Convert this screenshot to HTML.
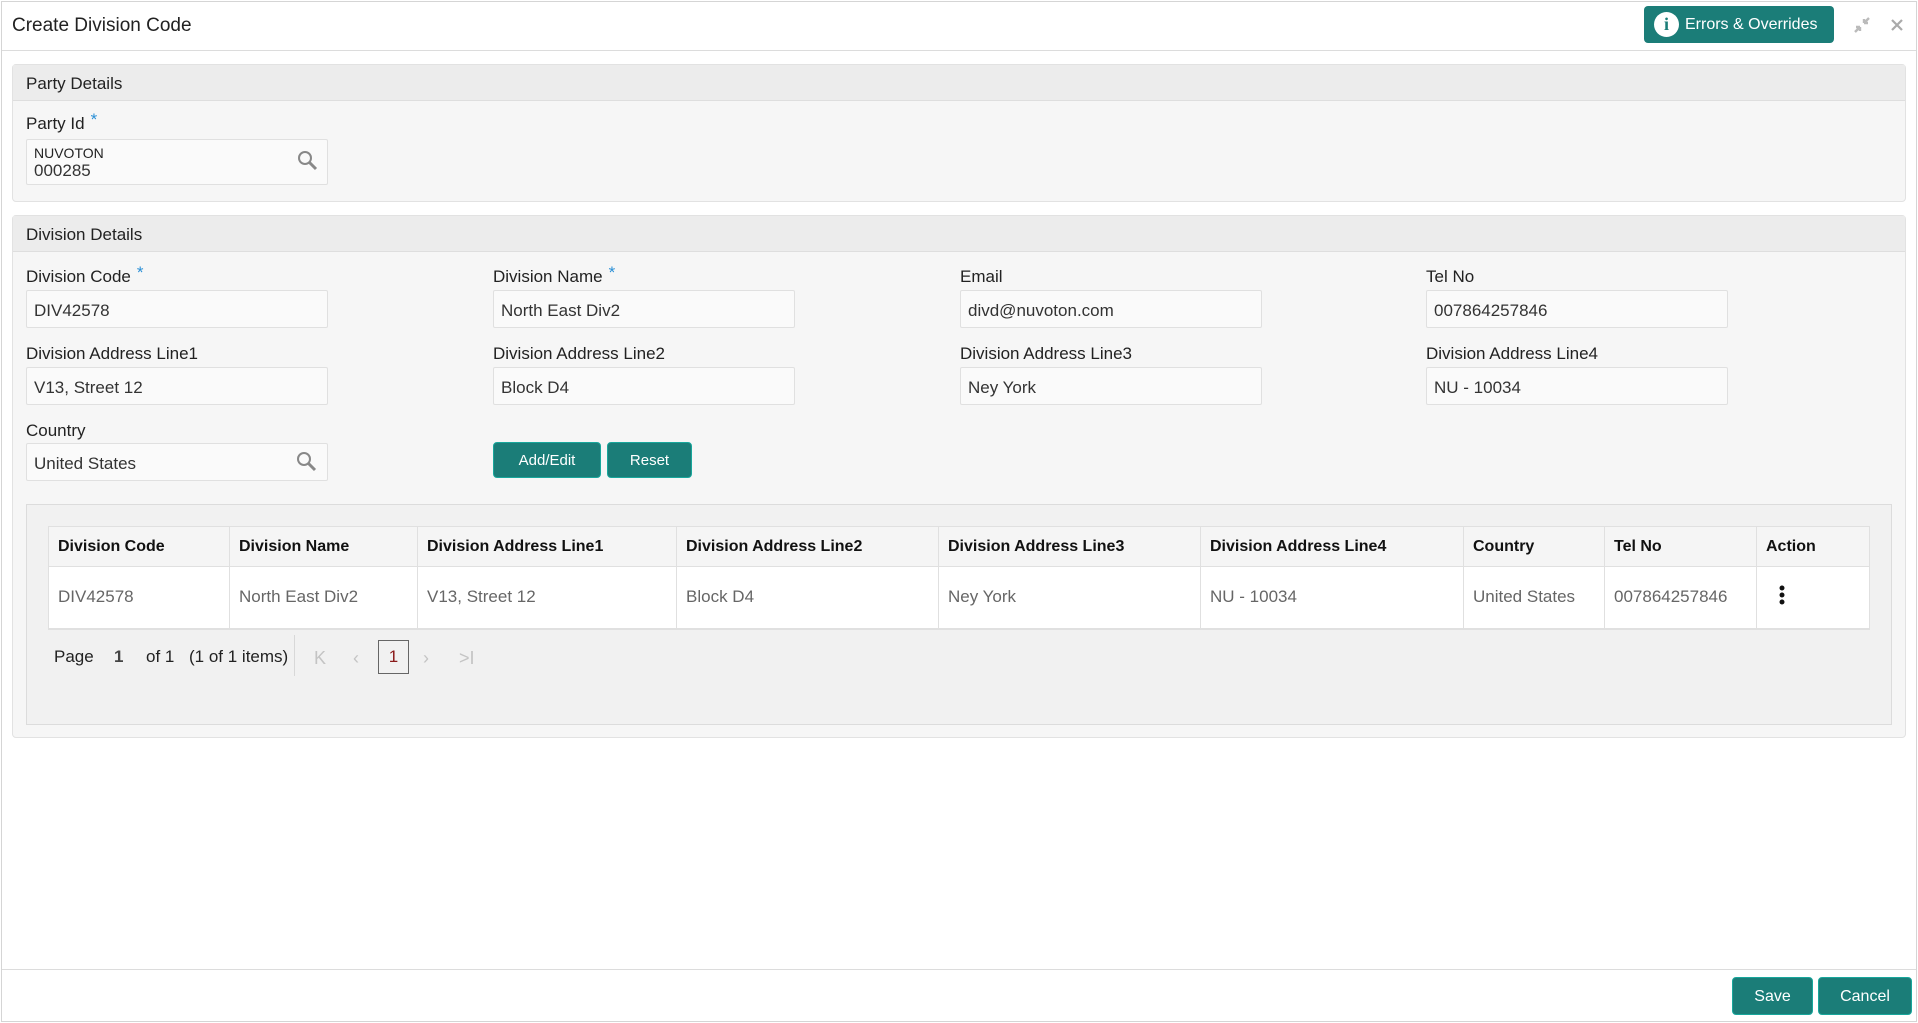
<!DOCTYPE html>
<html><head><meta charset="utf-8"><style>
*{box-sizing:border-box;margin:0;padding:0}
body{width:1918px;height:1023px;background:#fff;font-family:"Liberation Sans",sans-serif;color:#111;position:relative;overflow:hidden}
.a{position:absolute}
.frame{left:1px;top:1px;width:1916px;height:1021px;border:1px solid #d5d5d5}
.title{left:12px;top:15px;font-size:19px;color:#222}
.hline{left:2px;top:50px;width:1914px;height:1px;background:#dcdcdc}
.err{left:1644px;top:6px;width:190px;height:37px;background:#1b7d78;border-radius:4px;color:#fff;font-size:16px}
.err .ic{position:absolute;left:10px;top:6px;width:25px;height:25px;border-radius:50%;background:#fff;color:#1b7d78;font:bold 18px "Liberation Serif",serif;text-align:center;line-height:25px}
.err span{position:absolute;left:41px;top:10px}
.panel{left:12px;width:1894px;background:#f6f6f6;border:1px solid #e2e2e2;border-radius:4px}
.ph{position:absolute;left:0;top:0;right:0;height:36px;background:#ececec;border-bottom:1px solid #dedede;font-size:17px;padding:9px 13px;color:#222}
.lbl{font-size:17px;color:#222}
.lbl b{color:#2a8fd6;font-weight:normal;margin-left:6px;position:relative;top:-4px}
.inp{width:302px;height:38px;background:#fafafa;border:1px solid #e0e0e0;border-radius:2px;font-size:17px;color:#333;padding:10px 7px}
.btn{background:#1b7d78;border:1px solid #18a79c;border-radius:4px;color:#fff;font-size:15px;text-align:center;line-height:36px}
.grid{left:26px;top:504px;width:1866px;height:221px;background:#f1f1f1;border:1px solid #dcdcdc}
table{position:absolute;left:48px;top:526px;width:1822px;border-collapse:collapse}
td,th{border:1px solid #e0e0e0;text-align:left;padding:0 9px;font-size:17px}
th{height:40px;background:#f5f5f5;font-weight:bold;font-size:16px;color:#111}
td{height:62px;background:#fff;color:#666;border-bottom:2px solid #e0e0e0}
.pg{font-size:17px;color:#222;top:647px}
.gi{color:#c4c4c4;font-size:18px;top:648px}
.fline{left:2px;top:969px;width:1914px;height:1px;background:#dcdcdc}
</style></head><body>
<div class="a frame"></div>
<div class="a title">Create Division Code</div>
<div class="a hline"></div>
<div class="a err"><div class="ic">i</div><span>Errors &amp; Overrides</span></div>
<svg class="a" style="left:1852px;top:15px" width="20" height="20" viewBox="0 0 20 20"><path d="M3 17 L8 12 M8 12 L4 12 M8 12 L8 16" stroke="#bbb" stroke-width="2.4" fill="none"/><path d="M17 3 L12 8 M12 8 L16 8 M12 8 L12 4" stroke="#bbb" stroke-width="2.4" fill="none"/></svg>
<svg class="a" style="left:1890px;top:18px" width="14" height="14" viewBox="0 0 14 14"><path d="M2 2 L12 12 M12 2 L2 12" stroke="#aaa" stroke-width="2.2"/></svg>

<div class="a panel" style="top:64px;height:138px"><div class="ph">Party Details</div></div>
<div class="a lbl" style="left:26px;top:114px">Party Id<b>*</b></div>
<div class="a inp" style="left:26px;top:139px;height:46px;padding:5px 7px;font-size:14px;line-height:17px;color:#222">NUVOTON<br><span style="font-size:17px;color:#333">000285</span></div>
<svg class="a" style="left:297px;top:150px" width="22" height="22" viewBox="0 0 22 22"><circle cx="8" cy="8" r="6" stroke="#888" stroke-width="2" fill="none"/><path d="M12.5 12.5 L19 19" stroke="#888" stroke-width="3"/></svg>

<div class="a panel" style="top:215px;height:523px"><div class="ph">Division Details</div></div>

<div class="a lbl" style="left:26px;top:267px">Division Code<b>*</b></div>
<div class="a lbl" style="left:493px;top:267px">Division Name<b>*</b></div>
<div class="a lbl" style="left:960px;top:267px">Email</div>
<div class="a lbl" style="left:1426px;top:267px">Tel No</div>
<div class="a inp" style="left:26px;top:290px">DIV42578</div>
<div class="a inp" style="left:493px;top:290px">North East Div2</div>
<div class="a inp" style="left:960px;top:290px">divd@nuvoton.com</div>
<div class="a inp" style="left:1426px;top:290px">007864257846</div>

<div class="a lbl" style="left:26px;top:344px">Division Address Line1</div>
<div class="a lbl" style="left:493px;top:344px">Division Address Line2</div>
<div class="a lbl" style="left:960px;top:344px">Division Address Line3</div>
<div class="a lbl" style="left:1426px;top:344px">Division Address Line4</div>
<div class="a inp" style="left:26px;top:367px">V13, Street 12</div>
<div class="a inp" style="left:493px;top:367px">Block D4</div>
<div class="a inp" style="left:960px;top:367px">Ney York</div>
<div class="a inp" style="left:1426px;top:367px">NU - 10034</div>

<div class="a lbl" style="left:26px;top:421px">Country</div>
<div class="a inp" style="left:26px;top:443px">United States</div>
<svg class="a" style="left:296px;top:451px" width="22" height="22" viewBox="0 0 22 22"><circle cx="8" cy="8" r="6" stroke="#888" stroke-width="2" fill="none"/><path d="M12.5 12.5 L19 19" stroke="#888" stroke-width="3"/></svg>
<div class="a btn" style="left:493px;top:442px;width:108px;height:36px">Add/Edit</div>
<div class="a btn" style="left:607px;top:442px;width:85px;height:36px">Reset</div>

<div class="a grid"></div>
<table>
<tr><th style="width:181px">Division Code</th><th style="width:188px">Division Name</th><th style="width:259px">Division Address Line1</th><th style="width:262px">Division Address Line2</th><th style="width:262px">Division Address Line3</th><th style="width:263px">Division Address Line4</th><th style="width:141px">Country</th><th style="width:152px">Tel No</th><th>Action</th></tr>
<tr><td>DIV42578</td><td>North East Div2</td><td>V13, Street 12</td><td>Block D4</td><td>Ney York</td><td>NU - 10034</td><td>United States</td><td>007864257846</td><td style="padding-left:22px"><svg width="6" height="20" viewBox="0 0 6 20"><circle cx="3" cy="3" r="2.5" fill="#111"/><circle cx="3" cy="10" r="2.5" fill="#111"/><circle cx="3" cy="17" r="2.5" fill="#111"/></svg></td></tr>
</table>

<div class="a pg" style="left:54px">Page</div>
<div class="a pg" style="left:114px;font-weight:bold;color:#444">1</div>
<div class="a pg" style="left:146px">of 1</div>
<div class="a pg" style="left:189px">(1 of 1 items)</div>
<div class="a" style="left:294px;top:635px;width:1px;height:41px;background:#d8d8d8"></div>
<div class="a gi" style="left:314px">K</div>
<div class="a gi" style="left:353px">&lsaquo;</div>
<div class="a" style="left:378px;top:640px;width:31px;height:34px;border:1px solid #666;font-size:17px;text-align:center;line-height:32px;color:#8a1a1a">1</div>
<div class="a gi" style="left:423px">&rsaquo;</div>
<div class="a gi" style="left:459px">&gt;I</div>

<div class="a fline"></div>
<div class="a btn" style="left:1732px;top:977px;width:81px;height:38px;line-height:38px;font-size:16px">Save</div>
<div class="a btn" style="left:1818px;top:977px;width:94px;height:38px;line-height:38px;font-size:16px">Cancel</div>
</body></html>
